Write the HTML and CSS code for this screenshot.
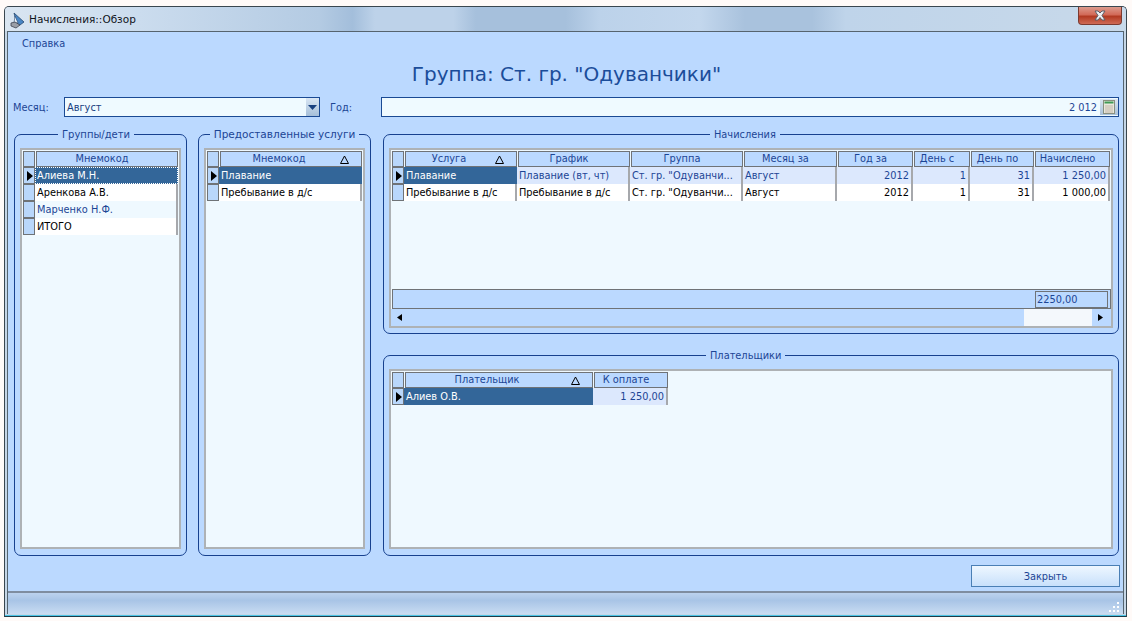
FILE: index.html
```html
<!DOCTYPE html>
<html lang="ru">
<head>
<meta charset="utf-8">
<title>Начисления::Обзор</title>
<link rel="stylesheet" href="styles.css">
</head>
<body>
<div class="window">
  <header class="titlebar">
    <svg class="app-icon" width="16" height="17" viewBox="0 0 16 17"><path d="M4 1l10 9-4 3-3-1z" fill="#4a86c4" stroke="#27476e" stroke-width=".8"/><path d="M5 4l3 7-4 0z" fill="#eef4fa" stroke="#27476e" stroke-width=".6"/><path d="M1 11l4-1 5 3-4 3-5-2z" fill="#9a9ea6" stroke="#3c4350" stroke-width=".8"/></svg>
    <span class="title-text">Начисления::Обзор</span>
    <button class="close" type="button" aria-label="Закрыть"><svg width="14" height="11" viewBox="0 0 14 11"><path d="M2 1h3l2 2 2-2h3l-3 4.500 3 4.500h-3l-2-2.500-2 2.500h-3l3-4.500z" fill="#eef0f4" stroke="#5a5f68" stroke-width="1"/></svg></button>
  </header>
  <div class="client">
    <nav class="menu"><span>Справка</span></nav>
    <h1 class="heading">Группа: Ст. гр. "Одуванчики"</h1>
    <div class="filters">
      <label class="lbl lbl-month">Месяц:</label>
      <div class="field combo"><span>Август</span><span class="combo-btn"><svg width="9" height="5" viewBox="0 0 9 5"><path d="M0 0h9L4.500 5z" fill="#17407f"/></svg></span></div>
      <label class="lbl lbl-year">Год:</label>
      <div class="field year"><span>2 012</span><span class="calc-btn"><svg width="12" height="14" viewBox="0 0 12 14"><rect x=".5" y=".5" width="11" height="13" fill="#e8e8dc" stroke="#8a9080"/><rect x="1.500" y="1.500" width="9" height="2" fill="#3f9a55"/><path d="M2 6h8M2 8h8M2 10h8M2 12h8" stroke="#c3b6a8"/></svg></span></div>
    </div>
    <div class="panels">
      <fieldset class="group narrow">
        <legend class="legend-kids">Группы/дети</legend>
        <div class="grid cols-single">
          <div class="row head"><i class="ind"></i><b class="hc">Мнемокод</b></div>
          <div class="row"><i class="ind cur"></i><span class="c sel focus">Алиева М.Н.</span></div>
          <div class="row"><i class="ind"></i><span class="c plain">Аренкова А.В.</span></div>
          <div class="row"><i class="ind"></i><span class="c tint">Марченко Н.Ф.</span></div>
          <div class="row"><i class="ind"></i><span class="c plain">ИТОГО</span></div>
        </div>
      </fieldset>
      <fieldset class="group narrow">
        <legend class="legend-wide">Предоставленные услуги</legend>
        <div class="grid cols-single">
          <div class="row head"><i class="ind"></i><b class="hc sorted">Мнемокод<svg class="sort" width="9" height="9" viewBox="0 0 9 9"><path d="M4.500 1L8.500 8.500H.5z" fill="none" stroke="#000"/></svg></b></div>
          <div class="row"><i class="ind cur"></i><span class="c sel">Плавание</span></div>
          <div class="row"><i class="ind"></i><span class="c plain">Пребывание в д/с</span></div>
        </div>
      </fieldset>
      <div class="right-col">
        <fieldset class="group charges">
          <legend class="legend-charges">Начисления</legend>
          <div class="grid cols-charges">
            <div class="row head"><i class="ind"></i><b class="hc sorted">Услуга<svg class="sort" width="9" height="9" viewBox="0 0 9 9"><path d="M4.500 1L8.500 8.500H.5z" fill="none" stroke="#000"/></svg></b><b class="hc">График</b><b class="hc">Группа</b><b class="hc">Месяц за</b><b class="hc">Год за</b><b class="hc">День с</b><b class="hc">День по</b><b class="hc">Начислено</b></div>
            <div class="row"><i class="ind cur"></i><span class="c sel">Плавание</span><span class="c hl">Плавание (вт, чт)</span><span class="c hl">Ст. гр. "Одуванчи...</span><span class="c hl">Август</span><span class="c hl num">2012</span><span class="c hl num">1</span><span class="c hl num">31</span><span class="c hl num">1 250,00</span></div>
            <div class="row"><i class="ind"></i><span class="c plain">Пребывание в д/с</span><span class="c plain">Пребывание в д/с</span><span class="c plain">Ст. гр. "Одуванчи...</span><span class="c plain">Август</span><span class="c plain num">2012</span><span class="c plain num">1</span><span class="c plain num">31</span><span class="c plain num">1 000,00</span></div>
            <div class="spacer"></div>
            <div class="totals"><span class="total-cell">2250,00</span></div>
            <div class="hscroll"><svg width="5" height="7" viewBox="0 0 5 7"><path d="M5 0v7L0 3.500z"/></svg><span class="thumb"></span><svg width="5" height="7" viewBox="0 0 5 7"><path d="M0 0v7l5-3.500z"/></svg></div>
          </div>
        </fieldset>
        <fieldset class="group payers">
          <legend class="legend-payers">Плательщики</legend>
          <div class="grid cols-payers">
            <div class="row head"><i class="ind"></i><b class="hc sorted">Плательщик<svg class="sort" width="9" height="9" viewBox="0 0 9 9"><path d="M4.500 1L8.500 8.500H.5z" fill="none" stroke="#000"/></svg></b><b class="hc">К оплате</b></div>
            <div class="row"><i class="ind cur"></i><span class="c sel">Алиев О.В.</span><span class="c hl num">1 250,00</span></div>
          </div>
        </fieldset>
      </div>
    </div>
    <div class="actions"><button class="btn" type="button">Закрыть</button></div>
    <footer class="status"><svg width="11" height="11" viewBox="0 0 11 11" fill="#fff"><rect x="8" y="0" width="2" height="2"/><rect x="4" y="4" width="2" height="2"/><rect x="8" y="4" width="2" height="2"/><rect x="0" y="8" width="2" height="2"/><rect x="4" y="8" width="2" height="2"/><rect x="8" y="8" width="2" height="2"/></svg></footer>
  </div>
</div>
</body>
</html>
```

FILE: styles.css
```css
* { box-sizing: border-box; }
html, body { margin: 0; height: 100%; }
body {
  background: #fffaf8;
  padding: 6px 5px 4px 4px;
  font: 9.8px/13px "DejaVu Sans", Verdana, sans-serif;
  color: #1b4595;
  overflow: hidden;
}
.window {
  height: 611px;
  display: flex;
  flex-direction: column;
  border: 1px solid #39464f;
  border-bottom-color: #1e3a46;
  border-radius: 5px 5px 0 0;
  background: #c6d6e6;
  padding: 0 2px 2px;
  box-shadow: inset 0 -1px 0 #4cc4e6;
}
.titlebar {
  flex: none;
  height: 24px;
  margin: 0 -2px;
  padding: 2px 4px 0 5px;
  display: flex;
  align-items: center;
  border-radius: 4px 4px 0 0;
  background: linear-gradient(90deg, #d9e5f1 0, #cbdcee 12%, #b4cbe3 28%, #a3bedb 31%, #bdd2e9 33%, #bdd2e9 40%, #a6c0dc 42%, #a6c0dc 50%, #bcd2ea 53%, #c3d7ed 62%, #a9c2dd 66%, #a9c2dd 72%, #bfd4ea 75%, #c8d9ea 100%);
}
.app-icon { flex: none; margin-right: 3px; }
.title-text { color: #10141c; font-size: 10.5px; margin-top: -1px; }
.close {
  margin: -2px 0 0 auto;
  align-self: flex-start;
  width: 44px;
  height: 18px;
  padding: 0;
  display: flex;
  align-items: center;
  justify-content: center;
  border: 1px solid #7c3a30;
  border-top: 0;
  border-radius: 0 0 4px 4px;
  background: linear-gradient(#dd9a8c 0, #d26a58 45%, #b23a22 55%, #cf6a55 100%);
}
.client {
  flex: 1;
  min-height: 0;
  display: flex;
  flex-direction: column;
  background: #bbd9ff;
  border: 1px solid #56646f;
  border-bottom: 0;
  padding: 5px 0 0;
}
.menu { height: 13px; margin-left: 14px; flex: none; }
.heading {
  flex: none;
  margin: 11px 0 0;
  height: 28px;
  font-weight: normal;
  font-size: 20px;
  line-height: 27px;
  text-align: center;
  color: #1b4d9a;
  padding-left: 2px;
}
.filters {
  flex: none;
  display: flex;
  align-items: center;
  height: 20px;
  margin-top: 8px;
  padding: 0 4px 0 5px;
}
.lbl { flex: none; }
.lbl-month { width: 51px; }
.lbl-year { width: 51px; margin-left: 10px; }
.field {
  height: 20px;
  display: flex;
  align-items: center;
  background: #effaff;
  border: 1px solid #1a4a94;
}
.combo { flex: none; width: 256px; padding-left: 2px; justify-content: space-between; color: #17407f; }
.combo-btn {
  width: 13px;
  height: 18px;
  display: flex;
  align-items: center;
  justify-content: center;
  background: linear-gradient(#d9e6f4, #a5bfd9);
}
.year { flex: 1; justify-content: flex-end; }
.calc-btn {
  width: 18px;
  height: 16px;
  margin-left: 3px;
  display: flex;
  align-items: center;
  justify-content: center;
  background: linear-gradient(#dbe6f1, #a9c1d9);
}
.panels {
  flex: none;
  display: flex;
  gap: 11px;
  height: 428px;
  margin-top: 11px;
  padding: 0 4px 0 6px;
}
.group {
  margin: 0;
  min-width: 0;
  padding: 7px 5px 6px;
  border: 1px solid #17418f;
  border-radius: 7px;
  display: flex;
  flex-direction: column;
}
.group legend { padding: 0 4px; white-space: nowrap; font-size: 10px; }
.group .legend-kids { margin-left: 38px; }
.group .legend-wide { margin: 0 auto; font-size: 10.5px; }
.group .legend-charges { margin-left: 321px; font-size: 9.8px; }
.group .legend-payers { margin-left: 317px; font-size: 9.8px; }
.narrow { flex: none; width: 173px; }
.right-col {
  flex: 1;
  min-width: 0;
  margin-left: 1px;
  display: flex;
  flex-direction: column;
  gap: 15px;
}
.charges { flex: none; height: 206px; padding-bottom: 5px; }
.payers { flex: 1; min-height: 0; }
.grid {
  flex: 1;
  min-height: 0;
  display: flex;
  flex-direction: column;
  padding: 1px 0 0 1px;
  background: #eff9ff;
  border: 2px solid #aeb2b5;
}
.grid.cols-charges { flex: none; height: 180px; }
.row { flex: none; display: grid; height: 17px; }
.cols-single .row { grid-template-columns: 12px 143px; }
.cols-charges .row { grid-template-columns: 12px 113px 113px 113px 94px 76px 57px 64px 76px; }
.cols-payers .row { grid-template-columns: 12px 189px 75px; }
.row.head { height: 16px; }
.ind {
  display: block;
  background: #b9d7fb;
  border: 1px solid #6f7377;
  position: relative;
}
.ind.cur::after {
  content: "";
  position: absolute;
  left: 3px;
  top: 3px;
  border-left: 6px solid #000;
  border-top: 5px solid transparent;
  border-bottom: 5px solid transparent;
}
.hc {
  font-weight: normal;
  text-align: center;
  background: #bbd9ff;
  border: 1px solid #6f7377;
  margin-left: 1px;
  padding-right: 10px;
  line-height: 14px;
  position: relative;
  white-space: nowrap;
  overflow: hidden;
}
.hc.sorted { padding-right: 24px; }
.sort { position: absolute; right: 12px; top: 3px; }
.c {
  padding: 0 0 0 2px;
  line-height: 17px;
  white-space: nowrap;
  overflow: hidden;
  border-right: 2px solid #a6a8ac;
}
.plain { background: #fff; color: #000; }
.tint { background: #eff9ff; color: #1b4595; }
.sel { background: #336699; color: #fff; border-right-color: #336699; }
.focus { outline: 1px dotted #fff; outline-offset: -1px; }
.hl { background: #dce8fd; color: #1b4595; }
.num { text-align: right; padding-right: 2px; }
.spacer { flex: 1; }
.totals {
  flex: none;
  height: 20px;
  width: 719px;
  padding: 1px 2px 0 0;
  display: flex;
  justify-content: flex-end;
  background: #bbd9ff;
  border: 1px solid #6f7377;
}
.total-cell {
  width: 73px;
  height: 17px;
  padding-left: 1px;
  line-height: 15px;
  border: 1px solid #6f7377;
}
.hscroll {
  flex: none;
  height: 17px;
  margin: 0 0 0 -1px;
  display: flex;
  align-items: center;
  background: #bbd9ff;
  padding: 0 8px 0 6px;
}
.thumb { width: 68px; height: 17px; margin: 0 6px 0 auto; background: #f4f8fc; }
.actions {
  flex: none;
  display: flex;
  justify-content: flex-end;
  margin-top: 9px;
  padding-right: 3px;
}
.btn {
  width: 149px;
  height: 22px;
  padding: 0;
  font: inherit;
  color: #1b4595;
  border: 1px solid #4a7fb5;
  background: linear-gradient(#eef7ff, #c8e0fb);
}
.status {
  flex: 1;
  margin-top: 4px;
  display: flex;
  justify-content: flex-end;
  align-items: flex-end;
  padding: 0 3px 1px 0;
  border-top: 2px solid #7f8da0;
  background: linear-gradient(#bcd2ee 0, #a8c4e6 35%, #c9dcf2 100%);
}
```
